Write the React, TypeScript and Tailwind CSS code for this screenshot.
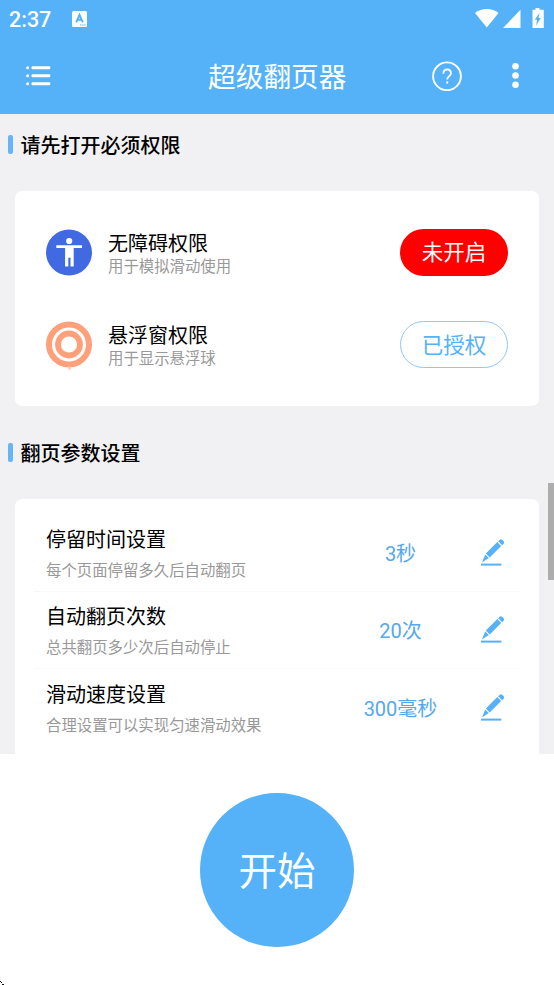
import type { ReactNode } from 'react';

const settings = [
  { title: '停留时间设置', hint: '每个页面停留多久后自动翻页', value: '3秒' },
  { title: '自动翻页次数', hint: '总共翻页多少次后自动停止', value: '20次' },
  { title: '滑动速度设置', hint: '合理设置可以实现匀速滑动效果', value: '300毫秒' },
];

function StatusBar() {
  return (
    <div className="flex h-[38px] items-center pl-[9px] pr-[9px]">
      <span className="w-[63px] pt-px text-[21.5px] font-medium leading-[38px]">2:37</span>
      <svg width="15" height="16" viewBox="0 0 15 16">
        <rect width="15" height="16" rx="1.5" fill="#fff" />
        <path d="M4.2 11.3 7.5 3.8 10.8 11.3M5.4 8.8h4.2" fill="none" stroke="#55b1f8" strokeWidth="1.9" />
        <path d="M8 14h5.5" stroke="#55b1f8" strokeWidth="1" strokeDasharray="1.4 .7" />
      </svg>
      <div className="grow" />
      <svg width="70" height="22" viewBox="0 0 70 22" fill="#fff">
        <path d="M0 5C6-.2 17.500-.2 23.500 5L11.800 19.500Z" />
        <path d="M45.500 1.800V20H28Z" />
        <path d="M60.500 0h4v1.800h4.300V20H57.500V1.800h3Z" />
        <path d="M64.500 4.800 59.800 11.800h2.300l-1 5.600 4.700-7.300h-2.300Z" fill="#55b1f8" />
      </svg>
    </div>
  );
}

function ActionBar() {
  return (
    <div className="flex h-[76px] items-center pl-[26px] pr-[33px]">
      <svg width="25" height="20" viewBox="0 0 25 20" fill="#fff">
        {[0, 8, 16].map((y) => (
          <g key={y}>
            <circle cx="1.600" cy={y + 1.700} r="1.500" />
            <rect x="5.500" y={y + 0.2} width="18.800" height="3" rx="1" />
          </g>
        ))}
      </svg>
      <h1 className="ml-[157px] w-[139px] whitespace-nowrap pt-[3px] text-[27.7px] leading-[40px]">超级翻页器</h1>
      <svg className="ml-[85px]" width="30" height="30" viewBox="0 0 30 30" fill="none" stroke="#fff">
        <circle cx="15" cy="15.300" r="13.900" strokeWidth="1.900" />
        <path d="M11.400 12.700c0-2.600 1.500-4.200 3.800-4.200s3.700 1.500 3.700 3.700c0 3-3.700 3.200-3.700 6.400" strokeWidth="1.800" />
        <path d="M15.200 20.400v2.200" strokeWidth="1.900" />
      </svg>
      <svg className="ml-[50px]" width="7" height="26" viewBox="0 0 7 26" fill="#fff">
        <circle cx="3.500" cy="3.300" r="3.300" />
        <circle cx="3.500" cy="12.500" r="3.300" />
        <circle cx="3.500" cy="21.700" r="3.300" />
      </svg>
    </div>
  );
}

function SectionTitle({ children }: { children: ReactNode }) {
  return (
    <div className="flex h-[30px] items-start pl-[7.5px]">
      <span className="mt-[5px] h-[19px] w-[5px] rounded-[2px] bg-[#66b5f6]" />
      <h2 className="ml-2 pt-px text-[20px] font-medium leading-[30px] text-black">{children}</h2>
    </div>
  );
}

function Permission({ icon, title, hint, action }: { icon: ReactNode; title: string; hint: string; action: ReactNode }) {
  return (
    <div className="flex h-[47px] items-start">
      {icon}
      <div className="ml-4 grow pt-[2px]">
        <div className="text-[20px] leading-[26px] text-black">{title}</div>
        <div className="text-[15.4px] leading-[21px] text-[#999]">{hint}</div>
      </div>
      {action}
    </div>
  );
}

function PencilIcon() {
  return (
    <svg className="ml-[34px] mt-px" width="24" height="28" viewBox="0 0 24 28" fill="#55b1f8">
      <path d="M17.200 2.200 18.700.8q1.200-1 2.400 0l1.500 1.500q1 1.200 0 2.400l-1.500 1.500Z" />
      <path d="M16.300 3.100 20.200 7 8.700 18.500 4.800 14.600Z" />
      <path d="M4.200 15.400 7.800 19 1 23.400Z" />
      <rect x="0" y="24.600" width="20.300" height="2" />
    </svg>
  );
}

export default function App() {
  return (
    <div
      className="relative flex h-[985px] w-[554px] flex-col overflow-hidden bg-white"
      style={{ fontFamily: 'Roboto, "Noto Sans CJK SC", sans-serif' }}
    >
      <header className="h-[114px] shrink-0 bg-[#55b1f8] text-white">
        <StatusBar />
        <ActionBar />
      </header>

      <main className="h-[640px] shrink-0 overflow-hidden bg-[#f1f1f3] pt-4">
        <SectionTitle>请先打开必须权限</SectionTitle>
        <section className="mx-[15px] mt-[31px] flex h-[215px] flex-col gap-[45px] rounded-[7px] bg-white pl-[31px] pr-[31px] pt-[38px]">
          <Permission
            title="无障碍权限"
            hint="用于模拟滑动使用"
            icon={
              <svg width="46" height="47" viewBox="0 0 46 47">
                <circle cx="23" cy="23.500" r="23" fill="#4169e1" />
                <circle cx="23.200" cy="12" r="3.100" fill="#fff" />
                <path d="M10.300 16.200h25.700v2.800h-8.300v18.500h-3.200v-8.700h-2.200v8.700h-3.200V19h-8.800Z" fill="#fff" />
              </svg>
            }
            action={
              <button className="h-[47px] w-[108px] rounded-full bg-[#f00] pt-px text-[21.5px] leading-[46px] text-white">未开启</button>
            }
          />
          <Permission
            title="悬浮窗权限"
            hint="用于显示悬浮球"
            icon={
              <svg className="overflow-visible" width="46" height="47" viewBox="0 0 46 47" fill="none" stroke="#ffa07a">
                <circle cx="23" cy="23.500" r="20" strokeWidth="6" />
                <circle cx="23" cy="23.500" r="11" strokeWidth="5.800" />
                <circle cx="23.500" cy="47" r="1.700" fill="#ffc9b5" stroke="none" />
              </svg>
            }
            action={
              <button className="h-[47px] w-[108px] rounded-full border border-[#8cc9f7] pt-px text-[21.5px] leading-[45px] text-[#55b1f8]">已授权</button>
            }
          />
        </section>

        <div className="mt-[32px]">
          <SectionTitle>翻页参数设置</SectionTitle>
        </div>
        <section className="mx-[15px] mt-[31px] h-[280px] rounded-t-[7px] bg-white px-[19px] pt-[15px]">
          {settings.map((item) => (
            <div key={item.title} className="flex h-[77.5px] items-center border-b border-[#f8f8f8] pl-3 pr-[15px] last:border-transparent">
              <div className="w-[278px] shrink-0 pt-[5px]">
                <div className="text-[20px] leading-[32px] text-black">{item.title}</div>
                <div className="text-[15.4px] leading-[30px] text-[#999]">{item.hint}</div>
              </div>
              <div className="ml-[30px] w-[93px] shrink-0 whitespace-nowrap pt-[3px] text-center text-[20px] leading-[30px] text-[#55a9ea]">{item.value}</div>
              <PencilIcon />
            </div>
          ))}
        </section>
      </main>

      <footer className="flex grow items-center justify-center">
        <button className="h-[154px] w-[154px] rounded-full bg-[#55b1f8] pt-[3px] text-[38.5px] leading-[151px] text-white">开始</button>
      </footer>

      {/* Scroll thumb floats over the right edge of the page. */}
      <div className="absolute right-0 top-[483px] h-[97px] w-[6px] bg-[#adadad]" />
      {/* Corner pointer mark. */}
      <svg className="absolute bottom-0 left-0" width="5" height="5" viewBox="0 0 5 5" fill="#111">
        <path d="M0 1h1v1H0zM1 2h1v1H1zM2 4h2v1H2z" />
      </svg>
    </div>
  );
}
